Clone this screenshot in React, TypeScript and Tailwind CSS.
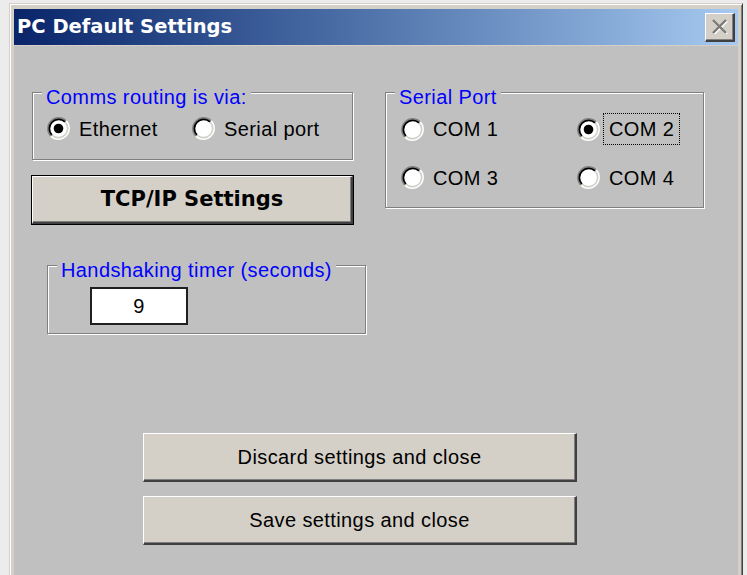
import React from "react";

const SANS = "font-['Liberation_Sans',Arial,sans-serif]";

// classic sunken radio button, drawn at 23px
function Radio({ checked = false }: { checked?: boolean }) {
  return (
    <svg width="23" height="23" viewBox="0 0 23 23" className="shrink-0">
      <circle cx="11.5" cy="11.5" r="10" fill="#ffffff" />
      <path d="M3.9 19.1 A10.75 10.75 0 0 1 19.1 3.9" fill="none" stroke="#808080" strokeWidth="1.6" />
      <path d="M19.1 3.9 A10.75 10.75 0 0 1 3.9 19.1" fill="none" stroke="#ffffff" strokeWidth="1.6" />
      <path d="M4.96 18.04 A9.25 9.25 0 0 1 18.04 4.96" fill="none" stroke="#000000" strokeWidth="1.8" />
      <path d="M18.04 4.96 A9.25 9.25 0 0 1 4.96 18.04" fill="none" stroke="#d4d0c8" strokeWidth="1.6" />
      {checked && <circle cx="11.5" cy="11.5" r="4.8" fill="#000000" />}
    </svg>
  );
}

function RadioOption({
  label,
  checked,
  focused,
  className = "",
}: {
  label: string;
  checked?: boolean;
  focused?: boolean;
  className?: string;
}) {
  return (
    <div className={`flex items-center ${className}`}>
      <Radio checked={checked} />
      {focused ? (
        <span className="ml-[3px] border border-dotted border-black px-[5px] py-[5px] leading-[20px]">
          {label}
        </span>
      ) : (
        <span className="ml-[9px] leading-[20px]">{label}</span>
      )}
    </div>
  );
}

// etched frame with the caption sitting on the top edge
function Group({
  title,
  className = "",
  children,
}: {
  title: string;
  className?: string;
  children?: React.ReactNode;
}) {
  return (
    <div
      className={`border border-[#808080] shadow-[1px_1px_0_#ffffff,inset_1px_1px_0_#ffffff] ${className}`}
    >
      <div className="-mt-[6px] ml-[9px] w-fit bg-[#c0c0c0] px-[4px] leading-[20px] text-[#0000ff]">
        {title}
      </div>
      {children}
    </div>
  );
}

function Button({ label }: { label: string }) {
  return (
    <div className="flex h-[49px] w-[434px] items-center justify-center border-t border-l border-t-[#ffffff] border-l-[#ffffff] border-r-2 border-b-2 border-r-[#404040] border-b-[#404040] bg-[#d4d0c8] shadow-[inset_-1px_-1px_0_#808080]">
      {label}
    </div>
  );
}

export default function App() {
  return (
    <div className={`h-[575px] w-[747px] overflow-hidden bg-[#ececec] pt-[3px] pl-[9px] ${SANS} text-[20px] tracking-[0.4px] text-black`}>
      <div className="flex h-[600px] w-[734px] flex-col border border-t-[#d4d0c8] border-l-[#d4d0c8] border-r-[#404040] border-b-[#404040] bg-[#d4d0c8] px-[4px] pt-[5px] shadow-[inset_1px_1px_0_#ffffff,inset_-1px_-1px_0_#808080]">
        {/* TITLE BAR */}
        <div className="flex h-[36px] shrink-0 items-center justify-between bg-linear-to-r from-[#0a246a] to-[#a6caf0] pr-[3px] pl-[3px]">
          <span className="font-['DejaVu_Sans',sans-serif] text-[19.5px] font-bold tracking-normal text-white">
            PC Default Settings
          </span>
          <div className="flex h-[29px] w-[30px] items-center justify-center border-t border-l border-t-[#ffffff] border-l-[#ffffff] border-r-2 border-b-2 border-r-[#404040] border-b-[#404040] bg-[#d4d0c8] shadow-[inset_-1px_-1px_0_#808080]">
            <svg width="17" height="15" viewBox="0 0 17 15">
              <path d="M2 1 L15 14 M15 1 L2 14" stroke="#ffffff" strokeWidth="2.4" transform="translate(1 1)" />
              <path d="M2 1 L15 14 M15 1 L2 14" stroke="#7a7a7a" strokeWidth="2.4" />
            </svg>
          </div>
        </div>

        {/* CONTENT */}
        <div className="mt-px flex-1 bg-[#c0c0c0] pt-[46px] pl-[17px]">
          <div className="flex">
            {/* LEFT COLUMN */}
            <div className="w-[323px]">
              <Group title="Comms routing is via:" className="ml-px h-[68px] w-[321px]">
                <div className="mt-[10px] flex pl-[14px]">
                  <RadioOption label="Ethernet" checked className="w-[145px]" />
                  <RadioOption label="Serial port" />
                </div>
              </Group>

              <div className="mt-[15px] h-[50px] w-[323px] border border-black">
                <div className="flex h-full items-center justify-center border-t border-l border-t-[#ffffff] border-l-[#ffffff] border-r-2 border-b-2 border-r-[#404040] border-b-[#404040] bg-[#d4d0c8] font-['DejaVu_Sans',sans-serif] text-[21px] font-bold tracking-normal shadow-[inset_-1px_-1px_0_#808080]">
                  TCP/IP Settings
                </div>
              </div>

              <Group title="Handshaking timer (seconds)" className="mt-[40px] ml-[16px] h-[69px] w-[319px]">
                <div className="mt-[7px] ml-[42px] flex h-[38px] w-[98px] items-center justify-center border-2 border-[#202020] bg-white">
                  9
                </div>
              </Group>
            </div>

            {/* SERIAL PORT */}
            <Group title="Serial Port" className="ml-[31px] h-[116px] w-[319px]">
              <div className="mt-[10px] grid grid-cols-[176px_1fr] gap-y-[25px] pl-[15px]">
                <RadioOption label="COM 1" />
                <RadioOption label="COM 2" checked focused className="-my-[4px]" />
                <RadioOption label="COM 3" />
                <RadioOption label="COM 4" />
              </div>
            </Group>
          </div>

          {/* ACTIONS */}
          <div className="mt-[99px] ml-[112px] flex flex-col gap-[14px]">
            <Button label="Discard settings and close" />
            <Button label="Save settings and close" />
          </div>
        </div>
      </div>
    </div>
  );
}
